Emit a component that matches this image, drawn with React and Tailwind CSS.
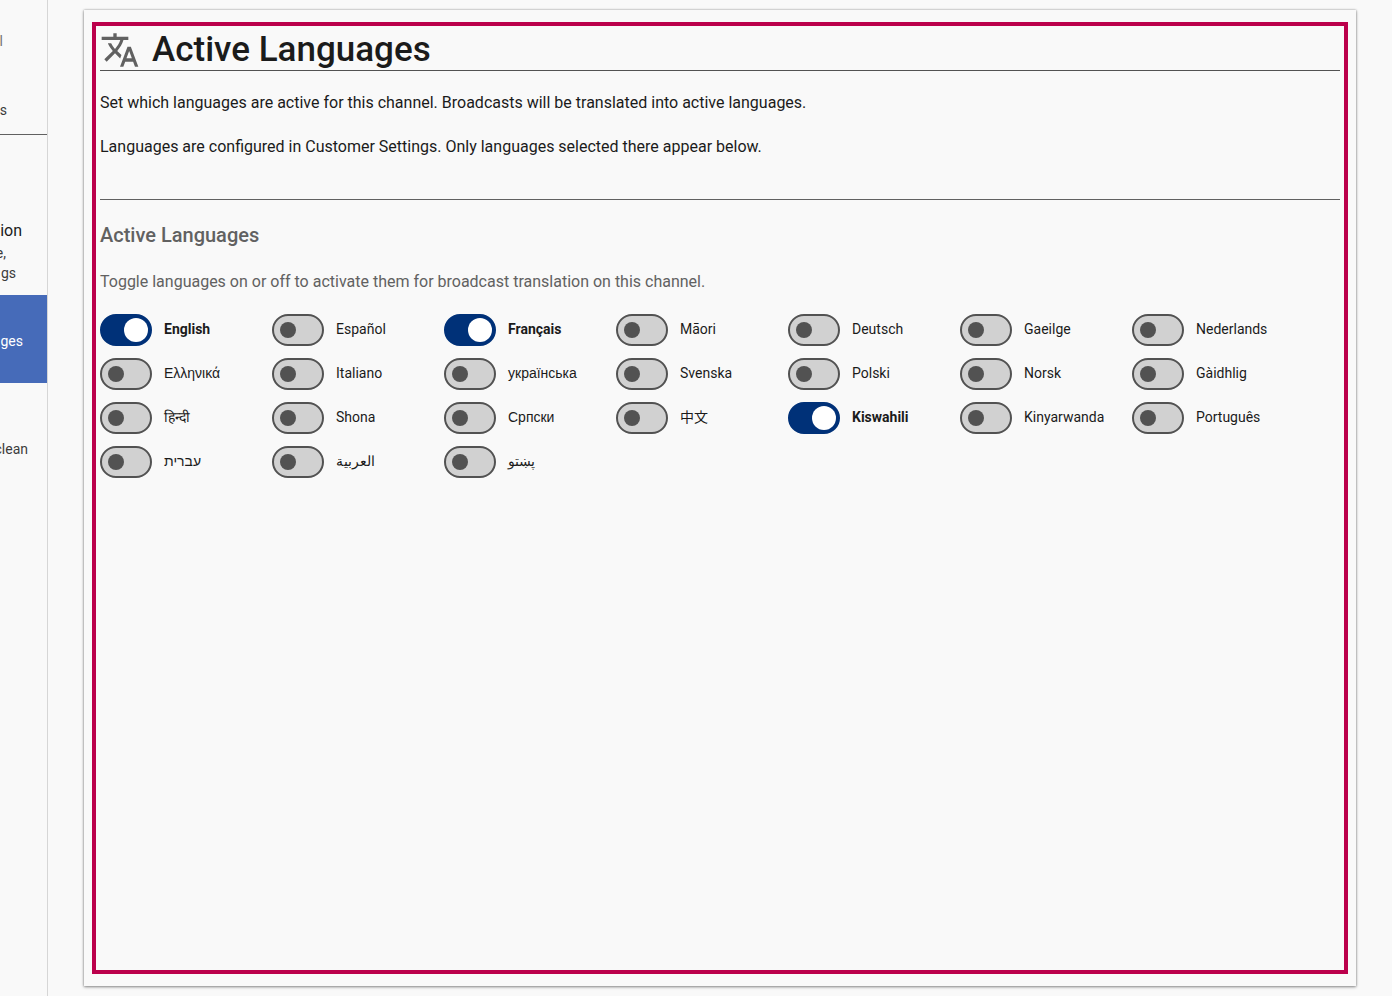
const languages = [
  { name: 'English', active: true },
  { name: 'Español' },
  { name: 'Français', active: true },
  { name: 'Māori' },
  { name: 'Deutsch' },
  { name: 'Gaeilge' },
  { name: 'Nederlands' },
  { name: 'Ελληνικά', script: 'other' },
  { name: 'Italiano' },
  { name: 'українська', script: 'other' },
  { name: 'Svenska' },
  { name: 'Polski' },
  { name: 'Norsk' },
  { name: 'Gàidhlig' },
  { name: 'हिन्दी', script: 'other' },
  { name: 'Shona' },
  { name: 'Српски', script: 'other' },
  { name: '中文', script: 'other' },
  { name: 'Kiswahili', active: true },
  { name: 'Kinyarwanda' },
  { name: 'Português' },
  { name: 'עברית', script: 'other' },
  { name: 'العربية', script: 'other' },
  { name: 'پښتو', script: 'other' },
];

function TranslateIcon() {
  return (
    <svg viewBox="0 0 24 24" className="size-10 shrink-0 fill-[#616161]" aria-hidden="true">
      <path d="M12.87 15.07l-2.54-2.51.03-.03c1.74-1.94 2.98-4.17 3.71-6.53H17V4h-7V2H8v2H1v1.99h11.17C11.5 7.92 10.44 9.75 9 11.35 8.07 10.32 7.3 9.19 6.69 8h-2c.73 1.63 1.73 3.17 2.98 4.56l-5.09 5.02L4 19l5-5 3.11 3.11.76-2.04zM18.5 10h-2L12 22h2l1.12-3h4.75L21 22h2l-4.5-12zm-2.62 7l1.62-4.33L19.12 17h-3.24z" />
    </svg>
  );
}

function Sidebar() {
  return (
    <nav className="w-12 shrink-0 overflow-hidden whitespace-nowrap border-r border-[#d6d6d6] text-sm text-[#3c3c3c]">
      <a href="#channel" className="flex justify-end pt-[31px] pr-11 text-[#757575]">l</a>
      <a href="#settings" className="flex justify-end pt-[49px] pr-10">s</a>
      <hr className="mt-3.5 border-[#616161]" />
      <a href="#information" className="block pt-[84px] pb-3">
        <span className="flex justify-end pr-[25px] text-base text-[#1b1b1b]">ion</span>
        <span className="flex justify-end pr-[41px]">e,</span>
        <span className="flex justify-end pr-[31px]">gs</span>
      </a>
      <a href="#languages" className="flex h-[88px] items-center justify-end bg-[#466bb9] pt-1 pr-6 text-white">ges</a>
      <a href="#clean" className="flex justify-end pt-14 pr-[19px]">clean</a>
    </nav>
  );
}

function LanguageToggle({ name, script, active = false }) {
  const font =
    script === 'other' ? "font-['Liberation_Sans','Noto_Sans_CJK_JP',sans-serif]" : '';
  return (
    <label className="flex items-center gap-3 text-sm has-checked:font-bold">
      <input
        type="checkbox"
        role="switch"
        defaultChecked={active}
        className="flex h-8 w-[52px] shrink-0 appearance-none items-center rounded-full border-2 border-[#525252] bg-[#d1d1d1] px-1.5 before:size-4 before:rounded-full before:bg-[#525252] checked:justify-end checked:border-[#003178] checked:bg-[#003178] checked:px-0.5 checked:before:size-6 checked:before:bg-white"
      />
      <span className={`whitespace-nowrap pb-0.5 ${font}`}>{name}</span>
    </label>
  );
}

export default function App() {
  return (
    <div className="flex min-h-screen bg-[#f9f9f9] font-[Roboto,'Liberation_Sans','Noto_Sans_CJK_JP',sans-serif] text-[#1b1b1b]">
      <Sidebar />
      <div className="flex min-w-0 grow px-9 py-2.5">
        <main className="flex grow bg-[#f9f9f9] px-2 py-3 shadow-[0_0_2px_0_rgba(0,0,0,0.3),0_1px_3px_0_rgba(0,0,0,0.4)]">
          <div className="grow border-4 border-[#bb004b] p-1">
            <header className="flex items-center gap-3 border-b border-[#525252]">
              <TranslateIcon />
              <h1 className="text-[35px] leading-10 font-medium">Active Languages</h1>
            </header>
            <p className="mt-5">
              Set which languages are active for this channel. Broadcasts will be translated into active languages.
            </p>
            <p className="mt-5">
              Languages are configured in Customer Settings. Only languages selected there appear below.
            </p>
            <hr className="mt-10 border-[#616161]" />
            <h2 className="mt-5 text-xl leading-[30px] font-medium text-[#616161]">Active Languages</h2>
            <p className="mt-5 text-[#616161]">
              Toggle languages on or off to activate them for broadcast translation on this channel.
            </p>
            <div className="mt-5 grid grid-cols-[repeat(auto-fill,172px)] gap-y-3">
              {languages.map((language) => (
                <LanguageToggle key={language.name} {...language} />
              ))}
            </div>
          </div>
        </main>
      </div>
    </div>
  );
}
